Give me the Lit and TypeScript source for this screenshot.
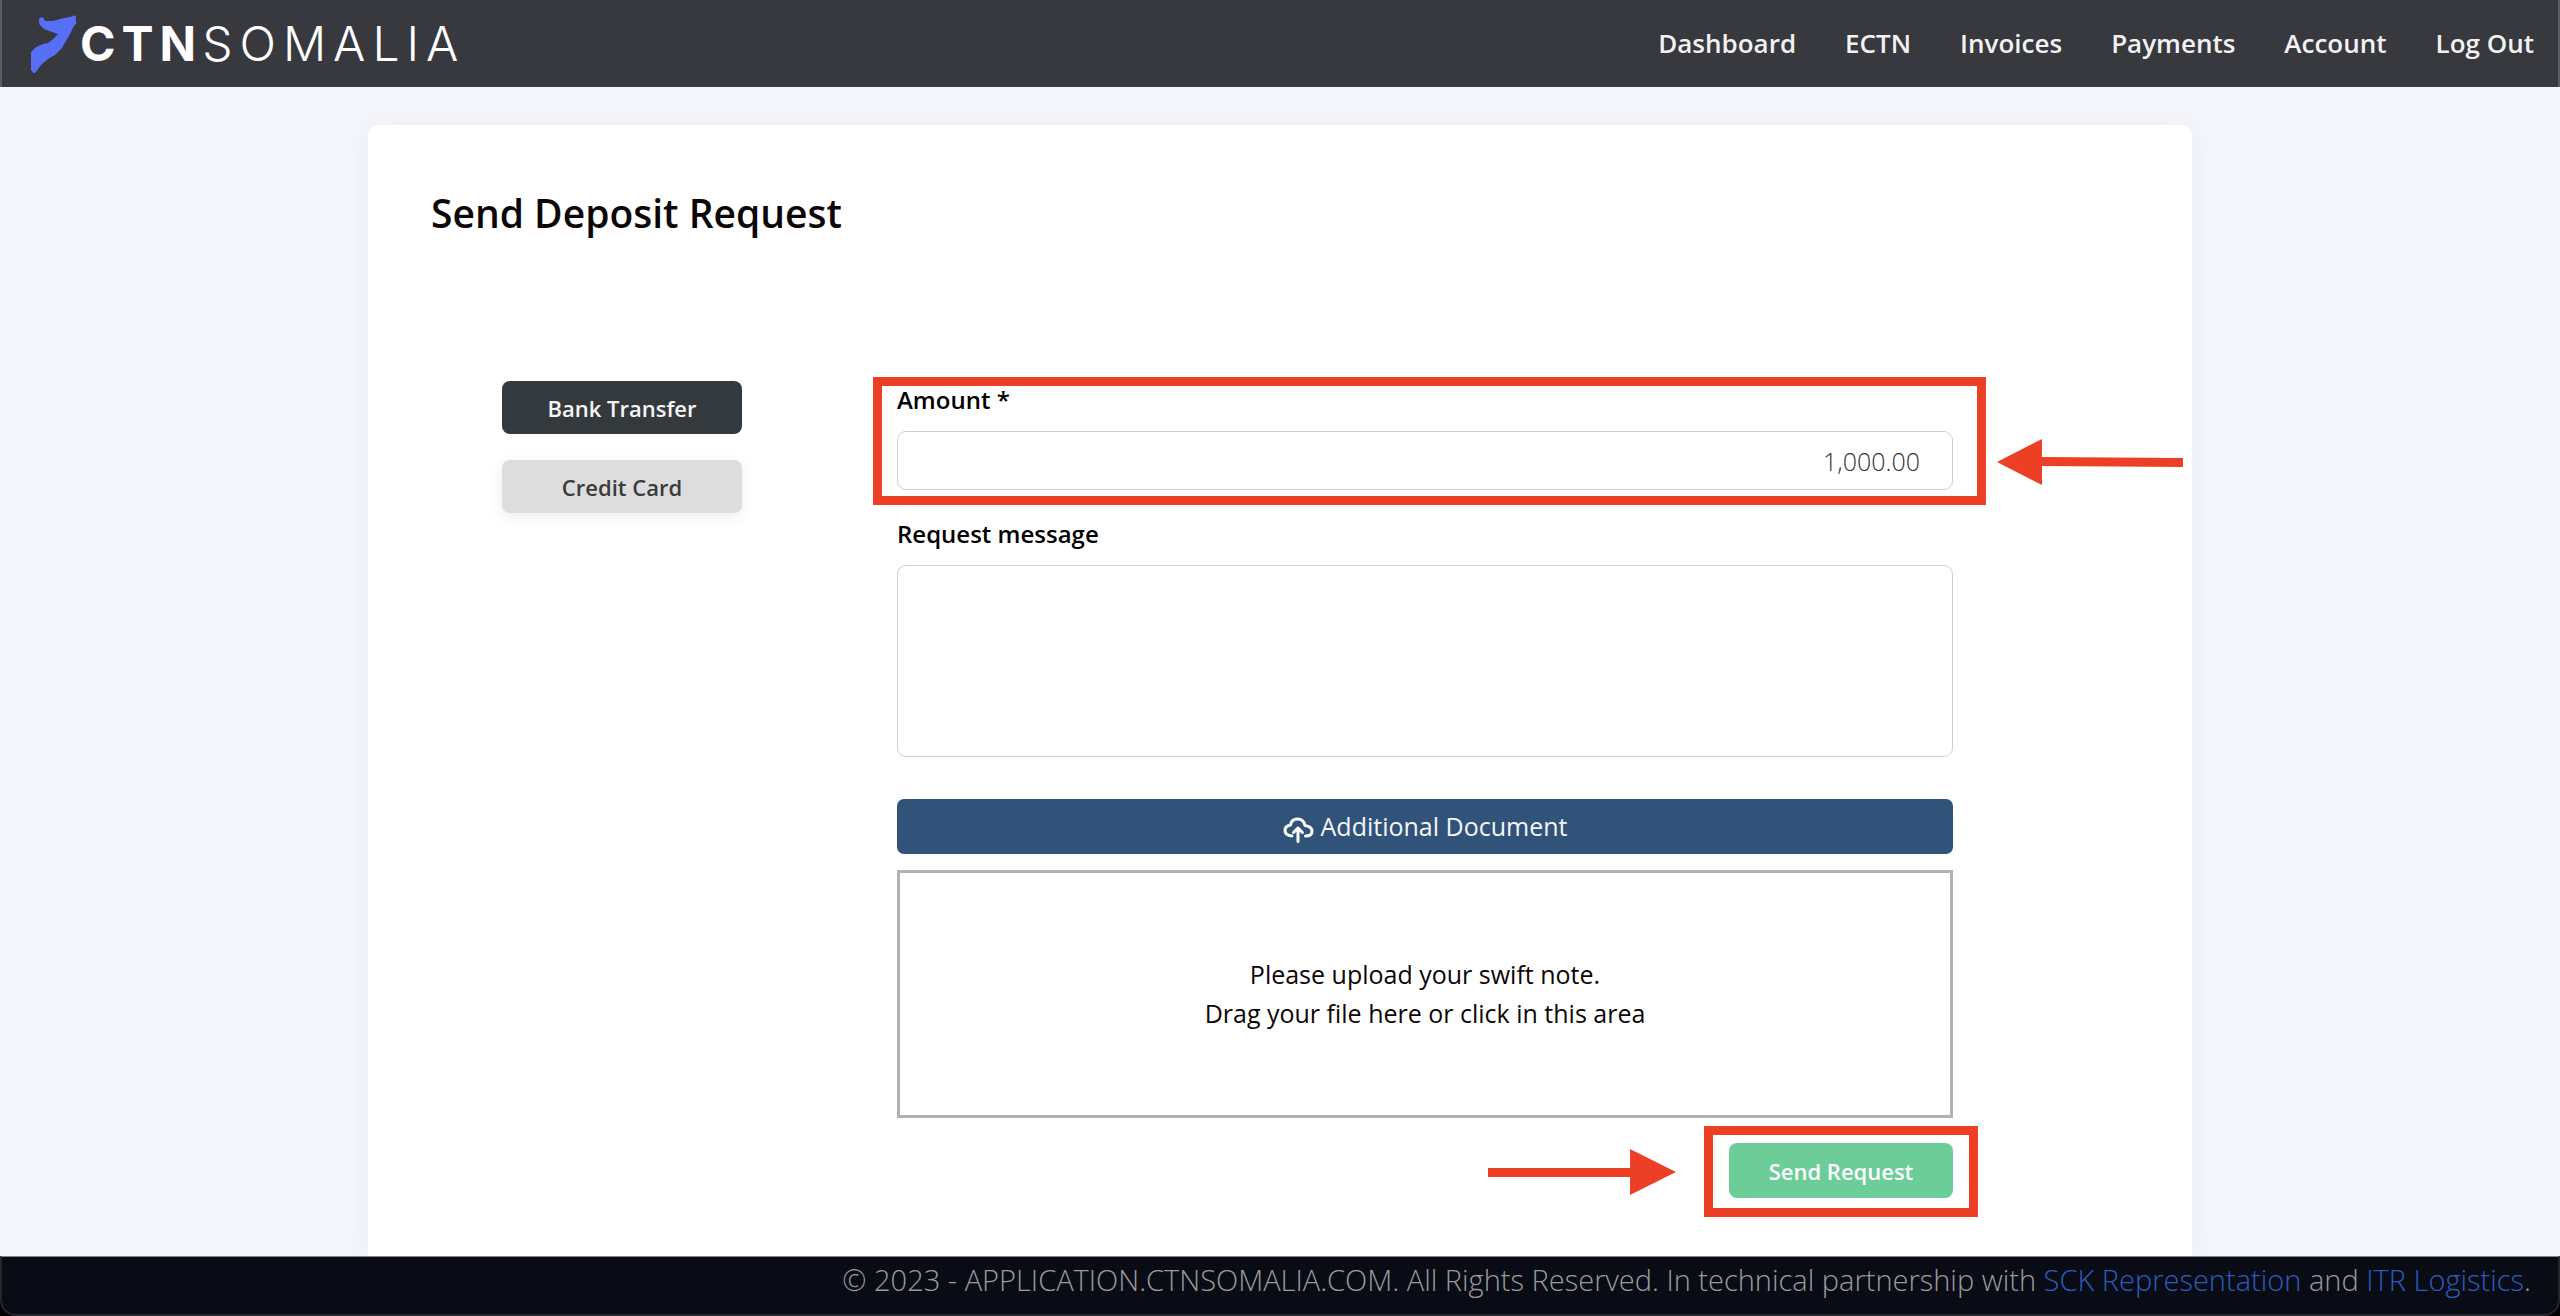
import { LitElement, html, css, svg } from "lit";
import { customElement, state } from "lit/decorators.js";

type Method = "bank" | "card";

const NAV_LINKS = ["Dashboard", "ECTN", "Invoices", "Payments", "Account", "Log Out"];

/* Brand mark followed by the two-weight word mark. */
@customElement("brand-logo")
export class BrandLogo extends LitElement {
  static styles = css`
    :host {
      display: block;
    }
    .logo {
      display: flex;
      align-items: center;
      gap: 3px;
      color: #fff;
      text-decoration: none;
      font-family: Inter, sans-serif;
      font-size: 48px;
      line-height: 56px;
    }
    .mark {
      width: 46px;
      height: 60px;
      fill: #566ff6;
    }
    .word {
      display: flex;
    }
    .strong {
      font-weight: 700;
      letter-spacing: 6px;
    }
    .thin {
      font-weight: 300;
      letter-spacing: 7px;
    }
  `;

  render() {
    return html`
      <a class="logo" href="#">
        <svg class="mark" viewBox="31 15 46 60" aria-hidden="true">
          <path
            d="M39 20Q41 17.500 43 18.500L45 22L52 22L55 21.500L62 19.500L71 17.800L74 16.500L76 17L75.800 21L76.600 24L74 27L70 35L66 42L62 49L55 56L48 60L41 66L36 73Q34.500 75 33 73.500L31 71L31 53L36 48L43 45L48 44L52 41L58 35L52 33L44 30L39.500 25.500Q38.500 23 39 20Z"
          />
        </svg>
        <span class="word"><span class="strong">CTN</span><span class="thin">SOMALIA</span></span>
      </a>
    `;
  }
}

const cloudIcon = svg`
  <path d="M21 31Q14 30.500 14 25.500Q14 21 19.500 20Q20.500 14 26.500 14Q32.500 14 34 20.500Q41 21.500 41 26.500Q41 31 34.500 31" />
  <path d="M27 36.500V23M22.500 27.500L27 23L31.500 27.500" />
`;

@customElement("app-root")
export class AppRoot extends LitElement {
  @state() private method: Method = "bank";

  static styles = css`
    :host {
      display: flex;
      flex-direction: column;
      height: 100vh;
      background: #f6f7fc;
      color: #0d0606;
      font-family: "Open Sans", sans-serif;
      font-size: 25px;
      line-height: 39px;
    }
    *,
    *::before {
      box-sizing: border-box;
    }
    button,
    input,
    textarea {
      font: inherit;
    }
    button {
      cursor: pointer;
      border: 0;
    }
    .header {
      display: flex;
      align-items: center;
      justify-content: space-between;
      height: 87px;
      flex: none;
      padding: 0 24px 0 29px;
      background: #38383f;
      border: solid #5c5d64;
      border-width: 0 2px;
    }
    .nav {
      display: flex;
      gap: 49px;
      font-size: 26px;
    }
    .nav-link {
      color: #f2f2f2;
      text-decoration: none;
      font-weight: 600;
    }
    .main {
      flex: 1;
      min-height: 0;
      overflow: hidden;
      padding-top: 38px;
    }
    .card {
      width: 71.25%;
      min-height: 100%;
      margin: 0 auto;
      padding: 64px 63px;
      background: #fff;
      border-radius: 10px;
      box-shadow: 0 0 32px rgba(40, 50, 90, 0.06);
    }
    .title {
      margin: 0 0 144px;
      font-size: 39px;
      line-height: 48px;
      font-weight: 600;
    }
    .row {
      display: grid;
      grid-template-columns: 240px minmax(0, 1fr);
      column-gap: 155px;
      padding: 0 176px 0 71px;
    }
    .methods {
      display: flex;
      flex-direction: column;
      gap: 26px;
    }
    .method,
    .send {
      border-radius: 8px;
      font-size: 22px;
      line-height: 32px;
      font-weight: 600;
    }
    .method {
      height: 53px;
      background: #ddd;
      color: #3b3b3b;
      box-shadow: 0 4px 16px rgba(0, 0, 0, 0.08);
    }
    .method[aria-pressed="true"] {
      background: #34393d;
      color: #f5f5f5;
      box-shadow: none;
    }
    .form {
      display: flex;
      flex-direction: column;
      gap: 25px;
    }
    .field {
      display: flex;
      flex-direction: column;
      gap: 12px;
    }
    .label {
      color: #000;
      font-size: 24px;
      line-height: 38px;
      font-weight: 600;
    }
    .control {
      width: 100%;
      margin: 0;
      padding: 0 32px;
      background: #fff;
      border: 1px solid #cfcfcf;
      border-radius: 9px;
      color: #333;
      font-weight: 300;
      outline: none;
      resize: none;
    }
    .amount {
      height: 59px;
      text-align: right;
    }
    .message {
      display: block;
      height: 192px;
      padding: 12px 32px;
    }
    .upload {
      display: flex;
      flex-direction: column;
      gap: 16px;
      padding-top: 17px;
    }
    .document {
      display: flex;
      align-items: center;
      justify-content: center;
      gap: 6px;
      height: 55px;
      background: #31537a;
      border-radius: 7px;
      color: #f4f6f9;
    }
    .icon {
      width: 32px;
      height: 32px;
      fill: none;
      stroke: #fff;
      stroke-width: 3;
      stroke-linecap: round;
      stroke-linejoin: round;
    }
    .dropzone {
      display: flex;
      align-items: center;
      justify-content: center;
      height: 248px;
      border: 3px solid #b2b2b4;
      text-align: center;
      cursor: pointer;
    }
    .file {
      width: 0;
      height: 0;
      opacity: 0;
      padding: 0;
      border: 0;
    }
    .send-slot {
      align-self: flex-end;
    }
    .send {
      display: block;
      width: 224px;
      height: 55px;
      background: #6ccd98;
      color: #fff;
    }
    /* Red call-outs lie over the form and take no space in it. */
    .marked {
      position: relative;
    }
    .marked::before {
      content: "";
      position: absolute;
      border: 9px solid #eb4026;
      pointer-events: none;
    }
    .field.marked::before {
      inset: -4px -33px -15px -24px;
    }
    .send-slot.marked::before {
      inset: -17px -25px -19px;
    }
    .arrow {
      position: absolute;
      height: 46px;
      fill: #eb4026;
    }
    .arrow-left {
      width: 186px;
      top: 58px;
      left: calc(100% + 44px);
    }
    .arrow-right {
      width: 188px;
      top: 6px;
      right: calc(100% + 53px);
    }
    .footer-edge {
      flex: none;
      background: #000;
    }
    .footer {
      height: 60px;
      padding: 0 27px 0 0;
      background: #0a0c15;
      border: 2px solid #24252d;
      border-top: 1px solid #85868b;
      border-radius: 0 0 16px 16px;
      color: #9a9b9e;
      font-size: 29px;
      line-height: 46px;
      font-weight: 300;
      text-align: right;
    }
    .footer-link {
      color: #2a5cbf;
      text-decoration: none;
    }
  `;

  private methodButton(id: Method, text: string) {
    return html`<button
      class="method"
      type="button"
      aria-pressed=${this.method === id ? "true" : "false"}
      @click=${() => (this.method = id)}
    >
      ${text}
    </button>`;
  }

  render() {
    return html`
      <header class="header">
        <brand-logo></brand-logo>
        <nav class="nav">
          ${NAV_LINKS.map((text) => html`<a class="nav-link" href="#">${text}</a>`)}
        </nav>
      </header>

      <main class="main">
        <section class="card">
          <h1 class="title">Send Deposit Request</h1>
          <div class="row">
            <div class="methods">
              ${this.methodButton("bank", "Bank Transfer")}
              ${this.methodButton("card", "Credit Card")}
            </div>

            <form class="form" @submit=${(e: Event) => e.preventDefault()}>
              <div class="field marked">
                <label class="label" for="amount">Amount *</label>
                <input class="control amount" id="amount" type="text" inputmode="decimal" value="1,000.00" required />
                <svg class="arrow arrow-left" viewBox="0 0 186 46" aria-hidden="true">
                  <path d="M0 23L45 0V18L186 19V28L45 27V46Z" />
                </svg>
              </div>

              <div class="field">
                <label class="label" for="message">Request message</label>
                <textarea class="control message" id="message"></textarea>
              </div>

              <div class="upload">
                <button class="document" type="button">
                  <svg class="icon" viewBox="12 6 32 32" aria-hidden="true">${cloudIcon}</svg>
                  <span>Additional Document</span>
                </button>
                <label class="dropzone">
                  <span>Please upload your swift note.<br />Drag your file here or click in this area</span>
                  <input class="file" type="file" />
                </label>
              </div>

              <div class="send-slot marked">
                <svg class="arrow arrow-right" viewBox="0 0 188 46" aria-hidden="true">
                  <path d="M0 19H142V0L188 23L142 46V28H0Z" />
                </svg>
                <button class="send" type="submit">Send Request</button>
              </div>
            </form>
          </div>
        </section>
      </main>

      <div class="footer-edge">
        <footer class="footer">
          © 2023 - APPLICATION.CTNSOMALIA.COM. All Rights Reserved. In technical partnership with
          <a class="footer-link" href="#">SCK Representation</a> and
          <a class="footer-link" href="#">ITR Logistics</a>.
        </footer>
      </div>
    `;
  }
}
